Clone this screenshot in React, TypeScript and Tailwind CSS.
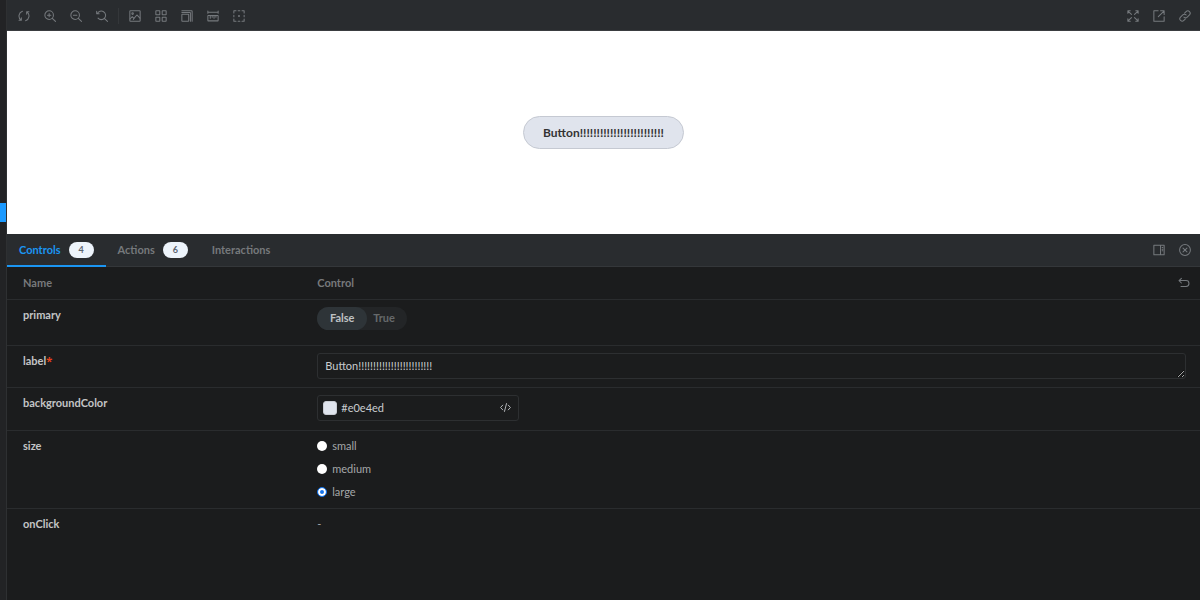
import type { ReactNode } from 'react';

const strip = 'flex shrink-0 items-center bg-[#292c2f]';

function Icon({ children, className = 'size-3' }: { children: ReactNode; className?: string }) {
  return (
    <svg
      viewBox="0 0 14 14"
      fill="none"
      stroke="currentColor"
      strokeWidth="1.2"
      strokeLinecap="round"
      strokeLinejoin="round"
      className={className}
      aria-hidden="true"
    >
      {children}
    </svg>
  );
}

function IconButton({ label, children }: { label: string; children: ReactNode }) {
  return (
    <button type="button" aria-label={label} className="flex size-3 items-center justify-center text-[#75797d]">
      <Icon>{children}</Icon>
    </button>
  );
}

function Lens() {
  return (
    <>
      <circle cx="6" cy="6" r="5" />
      <path d="M9.7 9.7 13.4 13.4" />
    </>
  );
}

function Toolbar() {
  return (
    <header className={`${strip} h-[31px] justify-between border-b border-[#3a3d40] pt-px pr-[9px] pl-[11px]`}>
      <div className="flex items-center gap-[14px]">
        <IconButton label="Remount component">
          <path d="M5.2 1.5A5.8 5.8 0 0 0 3.4 11.6M1.2 11.9h2.7V9.2" />
          <path d="M8.8 12.5A5.8 5.8 0 0 0 10.6 2.4M12.8 2.1h-2.7v2.7" />
        </IconButton>
        <IconButton label="Zoom in">
          <Lens />
          <path d="M6 4v4M4 6h4" />
        </IconButton>
        <IconButton label="Zoom out">
          <Lens />
          <path d="M4 6h4" />
        </IconButton>
        <IconButton label="Reset zoom">
          <path d="M1.6 4.2A5 5 0 1 1 2.4 9.5M.8 1.6v2.9h2.9M9.7 9.7l3.7 3.7" />
        </IconButton>
        <span className="-mx-1 h-4 w-px bg-[#34373a]" />
        <IconButton label="Change background">
          <rect x="1" y="1" width="12" height="12" rx=".6" />
          <circle cx="4.2" cy="4.2" r=".9" />
          <path d="m1.2 10.5 2.6-2.7 2 2 3.4-4 3.6 3.8M5 11l1-1.2" />
        </IconButton>
        <IconButton label="Apply a grid">
          <rect x="1" y="1" width="4.6" height="4.6" rx=".3" />
          <rect x="8.4" y="1" width="4.6" height="4.6" rx=".3" />
          <rect x="1" y="8.4" width="4.6" height="4.6" rx=".3" />
          <rect x="8.4" y="8.4" width="4.6" height="4.6" rx=".3" />
        </IconButton>
        <IconButton label="Change viewport size">
          <rect x="1" y="5" width="8" height="8" rx=".4" />
          <path d="M1 3h9.5a.5.5 0 0 1 .5.5V13M1 1h11.5a.5.5 0 0 1 .5.5V13" />
        </IconButton>
        <IconButton label="Measure">
          <path d="M1 2.5h12M1 1.2v2.6M13 1.2v2.6" />
          <rect x="1" y="6.5" width="12" height="6.2" rx=".4" />
          <path d="M3.8 6.5v3M6 6.5v2M8.2 6.5v3M10.4 6.5v2" />
        </IconButton>
        <IconButton label="Outline">
          <path d="M1 3.5V1h2.5M10.5 1H13v2.5M13 10.5V13h-2.5M3.5 13H1v-2.5M6 1h2M6 13h2M1 6v2M13 6v2" />
          <circle cx="7" cy="7" r=".5" fill="currentColor" />
        </IconButton>
      </div>
      <div className="flex items-center gap-[14px]">
        <IconButton label="Go full screen">
          <path d="M1 3.8V1h2.8M1.2 1.2l4 4M10.2 1H13v2.8M12.8 1.2l-4 4M13 10.2V13h-2.8M12.8 12.8l-4-4M3.8 13H1v-2.8M1.2 12.8l4-4" />
        </IconButton>
        <IconButton label="Open canvas in new tab">
          <path d="M6 1H1v12h12V8M8.8 1H13v4.2M12.8 1.2 6.2 7.8" />
        </IconButton>
        <IconButton label="Copy canvas link">
          <path d="m6.5 3.6 1.8-1.8a2.7 2.7 0 0 1 3.9 3.9L9.6 8.3a2.7 2.7 0 0 1-3.9 0" />
          <path d="m7.5 10.4-1.8 1.8a2.7 2.7 0 0 1-3.9-3.9l2.6-2.6a2.7 2.7 0 0 1 3.9 0" />
        </IconButton>
      </div>
    </header>
  );
}

const tabs = [
  { name: 'Controls', count: 4, active: true },
  { name: 'Actions', count: 6, active: false },
  { name: 'Interactions', count: null, active: false },
];

function PanelTabs() {
  return (
    <div className={`${strip} h-[33px] justify-between border-b border-[#34373a] pr-[9px]`}>
      <div role="tablist" className="flex h-[33px]">
        {tabs.map((tab) => (
          <button
            key={tab.name}
            type="button"
            role="tab"
            aria-selected={tab.active}
            className={`flex items-center gap-2 border-b-2 px-3 pt-px font-bold ${
              tab.active ? 'border-[#1b96f3] text-[#1b96f3]' : 'border-transparent text-[#76797c]'
            }`}
          >
            {tab.name}
            {tab.count !== null && (
              <span className="flex h-4 w-[25px] items-center justify-center rounded-full bg-[#edf4fb] text-[9px] text-[#5c6570]">
                {tab.count}
              </span>
            )}
          </button>
        ))}
      </div>
      <div className="flex items-center gap-[14px]">
        <IconButton label="Change addon orientation">
          <path d="M1 1.5h12v11H1zM8.8 1.5v11M10.7 4h.6M10.7 6h.6M10.7 8h.6" />
        </IconButton>
        <IconButton label="Hide addons">
          <circle cx="7" cy="7" r="6.3" />
          <path d="m4.7 4.7 4.6 4.6M9.3 4.7 4.7 9.3" />
        </IconButton>
      </div>
    </div>
  );
}

function Row({ name, required, height, children }: { name: string; required?: boolean; height: string; children: ReactNode }) {
  return (
    <tr className={`${height} border-t border-[#2a2c2e] align-top`}>
      <th scope="row" className="pt-[7px] pl-4 text-left font-bold text-[#c4c5c6]">
        {name}
        {required && <span className="font-['Open_Sans',sans-serif] text-[#e8401c]">*</span>}
      </th>
      <td className="pt-[7px] pr-[14px] pl-3">{children}</td>
    </tr>
  );
}

function ControlsTable() {
  return (
    <table className="w-full table-fixed border-collapse">
      <thead>
        <tr className="h-8 text-left text-[#77797b]">
          <th scope="col" className="w-1/4 pl-4 font-bold">Name</th>
          <th scope="col" className="pr-[10px] pl-3 font-bold">
            <div className="flex items-center justify-between">
              Control
              <IconButton label="Reset controls">
                <path d="M4 1.5 1.2 4.2 4 7M1.4 4.2h8a3.4 3.4 0 0 1 0 6.8H3.5" />
              </IconButton>
            </div>
          </th>
        </tr>
      </thead>
      <tbody>
        <Row name="primary" height="h-[46px]">
          <label className="inline-flex h-[23px] cursor-pointer items-stretch rounded-full bg-[#232527] font-bold">
            <input type="checkbox" role="switch" aria-label="primary" className="sr-only" />
            <span className="flex w-[50px] items-center justify-center rounded-full bg-[#2e3438] text-[#bec1c3]">False</span>
            <span className="flex items-center pr-3 pl-[6px] text-[#66696b]">True</span>
          </label>
        </Row>
        <Row name="label" required height="h-[42px]">
          <textarea
            aria-label="label"
            rows={1}
            defaultValue="Button!!!!!!!!!!!!!!!!!!!!!!!!!"
            className="block h-[26px] w-full resize-y overflow-hidden rounded-[3px] border border-[#2d2f31] px-[7px] py-1 text-[#c9cccf]"
          />
        </Row>
        <Row name="backgroundColor" height="h-[43px]">
          <div className="flex h-[26px] w-[202px] items-center gap-1 rounded-[3px] border border-[#2d2f31] pr-[7px] pl-[5px]">
            <span className="size-[14px] shrink-0 rounded-[3px] border border-[#c9ccd3] bg-[#e0e4ed]" />
            <input aria-label="backgroundColor" defaultValue="#e0e4ed" className="min-w-0 flex-1 text-[#c9cccf]" />
            <button type="button" aria-label="Toggle color format" className="text-[#b9bcbf]">
              <Icon className="size-[11px]">
                <path d="M3.5 4 .7 7l2.8 3M10.5 4l2.8 3-2.8 3M8.3 2 5.7 12" />
              </Icon>
            </button>
          </div>
        </Row>
        <Row name="size" height="h-[78px]">
          <div className="flex flex-col gap-[7px] text-[#a5a7a9]">
            {['small', 'medium', 'large'].map((size) => (
              <label key={size} className="flex items-center gap-[5px]">
                <input
                  type="radio"
                  name="size"
                  value={size}
                  defaultChecked={size === 'large'}
                  className="size-[10px] appearance-none rounded-full bg-white checked:border checked:border-[#1674ea] checked:bg-[#1674ea] checked:ring-2 checked:ring-white checked:ring-inset"
                />
                {size}
              </label>
            ))}
          </div>
        </Row>
        <Row name="onClick" height="h-[46px]">
          <span className="text-[#a5a7a9]">-</span>
        </Row>
      </tbody>
    </table>
  );
}

export default function App() {
  return (
    <div className="flex min-h-screen bg-[#1b1c1d] font-[Lato,'Open_Sans',sans-serif] text-[11px] leading-4">
      <aside className="w-[7px] shrink-0 border-r border-[#2e3032] bg-[#222325] pt-[203px]">
        <div className="h-[19px] bg-[#1b9aff]" />
      </aside>
      <main className="flex min-w-0 flex-1 flex-col">
        <Toolbar />
        <section className="flex h-[203px] shrink-0 items-center justify-center bg-white">
          <button
            type="button"
            className="h-[33px] rounded-full border border-[#c5c9d2] bg-[#e0e4ed] px-[19px] text-[12px] font-bold text-[#333]"
          >
            Button!!!!!!!!!!!!!!!!!!!!!!!!!
          </button>
        </section>
        <PanelTabs />
        <ControlsTable />
      </main>
    </div>
  );
}
